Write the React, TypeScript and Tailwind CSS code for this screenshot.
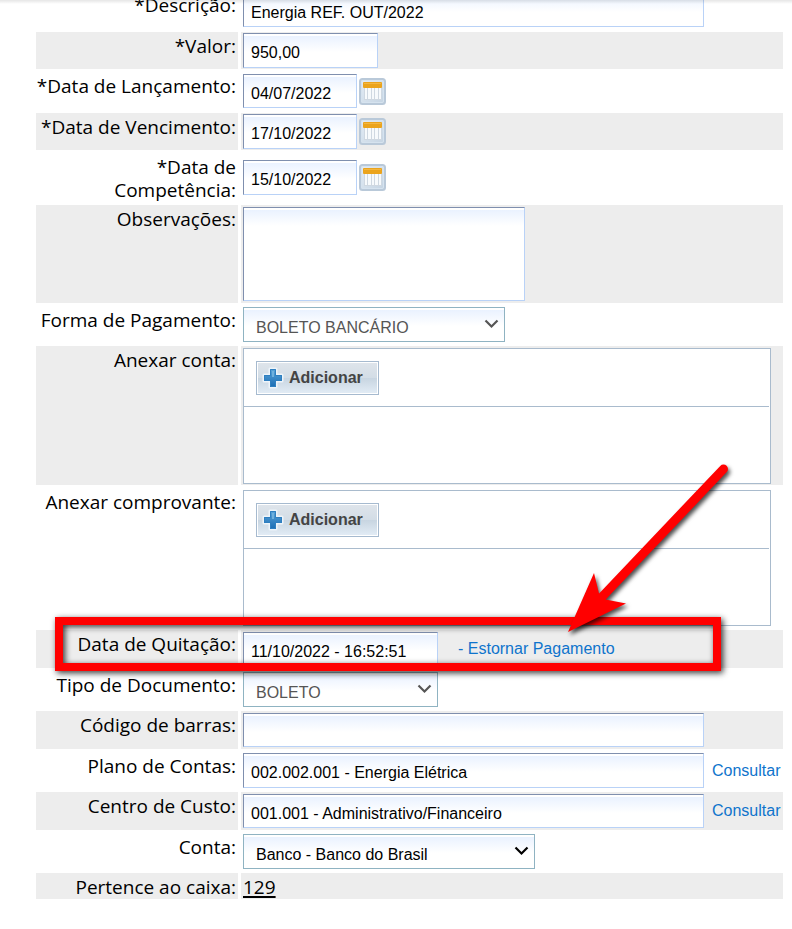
import { useId, type ReactNode } from "react";
import clsx from "clsx";

const fieldClass =
  "border border-t-[#7f8fae] border-l-[#7f8fae] border-r-[#b9d2f7] border-b-[#b9d2f7] bg-white bg-[linear-gradient(to_bottom,#ffffff_0px,#ffffff_2px,#eaf2ff_2px,#ffffff_18px)] pl-[7px] pt-[5px] text-base text-black outline-none";

type RowProps = {
  label: string;
  htmlFor?: string;
  shaded?: boolean;
  className?: string;
  children: ReactNode;
};

function Row({ label, htmlFor, shaded, className, children }: RowProps) {
  const bg = shaded ? "bg-[#ededed]" : "bg-white";

  return (
    <div className="grid grid-cols-[202px_1fr] gap-[3px]">
      <div
        className={clsx(
          "flex items-start justify-end pt-[3px] pr-0.5 text-right font-['Open_Sans','Noto_Sans',sans-serif] text-[19px] leading-[23px] whitespace-pre",
          bg,
        )}
      >
        <label htmlFor={htmlFor}>{label}</label>
      </div>
      <div className={clsx("flex items-center pl-0.5", bg, className)}>
        {children}
      </div>
    </div>
  );
}

function CalendarButton({ label }: { label: string }) {
  const gradientId = useId();

  return (
    <button type="button" aria-label={label} className="ml-0.5 shrink-0">
      <svg width="27" height="27" viewBox="0 0 27 27" fill="none">
        <defs>
          <linearGradient id={gradientId} x1="0" y1="0" x2="1" y2="1">
            <stop offset="0" stopColor="#e6eef6" />
            <stop offset="1" stopColor="#c3d3e2" />
          </linearGradient>
        </defs>
        <rect x="1" y="1" width="25" height="25" rx="2.5" fill={`url(#${gradientId})`} stroke="#b9c9d9" strokeWidth="2" />
        <rect x="2.5" y="2.5" width="22" height="22" rx="1.5" stroke="#d6e3ef" />
        <path d="M5 9h18v13H5z" fill="#cfd8e1" />
        <path d="M6 10h2v11H6zM9 10h3v11H9zM13 10h2v11h-2zM16 10h3v11h-3zM20 10h2v11h-2z" fill="#f7fafc" />
        <rect x="4" y="4" width="19" height="6" rx="1" fill="#eba41d" />
        <path d="M5 5.5h17" stroke="#f3b640" strokeWidth="1" />
      </svg>
    </button>
  );
}

type SelectProps = {
  id: string;
  value: string;
  disabled?: boolean;
  className: string;
};

function Select({ id, value, disabled, className }: SelectProps) {
  const color = disabled ? "text-[#555555]" : "text-black";

  return (
    <div className={clsx("relative h-[35px]", color, className)}>
      <select
        id={id}
        disabled={disabled}
        defaultValue={value}
        className="h-full w-full appearance-none border border-[#8fb3c2] bg-white bg-[linear-gradient(to_bottom,#ffffff_0px,#ffffff_2px,#eaf2ff_2px,#ffffff_18px)] pt-1.5 pl-3 text-base opacity-100 outline-none"
      >
        <option>{value}</option>
      </select>
      <svg
        className="pointer-events-none absolute top-3 right-1.5"
        width="15"
        height="10"
        viewBox="0 0 15 10"
        fill="none"
      >
        <path d="M1.5 1.5 7.5 7.5 13.5 1.5" stroke="currentColor" strokeWidth="2.2" />
      </svg>
    </div>
  );
}

function UploadPanel({ id }: { id: string }) {
  const gradientId = useId();

  return (
    <div className="h-[136px] w-[528px] border border-[#a9bbcd] bg-white">
      <div className="mr-px flex h-[58px] items-center border-b border-[#a9bbcd] pl-3">
        <button
          id={id}
          type="button"
          className="flex h-[34px] w-[123px] items-center border border-[#a6bacf] bg-[linear-gradient(to_bottom,#dfe5eb_0%,#d3dde6_49%,#c8d5e1_51%,#e3edf6_100%)] pl-[5px] text-base font-bold text-[#444444] shadow-[inset_0_0_0_1px_#ffffff]"
        >
          <svg width="22" height="22" viewBox="0 0 22 22" className="mr-[5px]">
            <defs>
              <linearGradient id={gradientId} x1="0" y1="0" x2="0" y2="1">
                <stop offset="0" stopColor="#5aa3d8" />
                <stop offset="1" stopColor="#1b6db4" />
              </linearGradient>
            </defs>
            <path
              d="M8 2h6v6h6v6h-6v6H8v-6H2V8h6z"
              fill={`url(#${gradientId})`}
              stroke="#edf4fa"
              strokeWidth="3"
              strokeLinejoin="round"
              paintOrder="stroke"
            />
            <path d="M8.5 2.5h5v6h6v5h-6v6h-5v-6h-6v-5h6z" fill="none" stroke="#2f7fc0" />
            <path d="M10 4h2v6h-2z" fill="#6fb0dd" />
          </svg>
          Adicionar
        </button>
      </div>
    </div>
  );
}

// Marcação em vermelho por cima do formulário
function Highlight() {
  return (
    <>
      <div className="pointer-events-none absolute top-[617px] left-[55px] h-[54px] w-[666px] border-8 border-[#ff0000] drop-shadow-[2px_2px_3px_rgba(0,0,0,0.8)]" />
      <svg
        className="pointer-events-none absolute top-[460px] left-[560px] drop-shadow-[2px_3px_2px_rgba(0,0,0,0.7)]"
        width="180"
        height="180"
        viewBox="560 460 180 180"
      >
        <path d="M723.5 469 600 599" stroke="#ff0000" strokeWidth="9" strokeLinecap="round" />
        <path d="M568 632 594 573 599 593.5 605.5 599.5 626 603.5z" fill="#ff0000" />
      </svg>
    </>
  );
}

export default function App() {
  return (
    <main className="relative overflow-hidden bg-white pb-[30px] font-['Liberation_Sans',Arial,sans-serif] text-black">
      <form className="-mt-[9px] flex flex-col gap-[3px] pr-[9px] pl-9">
        <Row label="*Descrição:" htmlFor="descricao" className="py-0.5">
          <input id="descricao" defaultValue="Energia REF. OUT/2022" className={clsx(fieldClass, "h-[34px] w-[461px]")} />
        </Row>

        <Row label="*Valor:" htmlFor="valor" shaded className="py-px">
          <input id="valor" defaultValue="950,00" className={clsx(fieldClass, "h-[35px] w-[135px]")} />
        </Row>

        <Row label="*Data de Lançamento:" htmlFor="lancamento" className="py-0.5">
          <input id="lancamento" defaultValue="04/07/2022" className={clsx(fieldClass, "h-[34px] w-[114px]")} />
          <CalendarButton label="Escolher data de lançamento" />
        </Row>

        <Row label="*Data de Vencimento:" htmlFor="vencimento" shaded className="py-px">
          <input id="vencimento" defaultValue="17/10/2022" className={clsx(fieldClass, "h-[35px] w-[114px]")} />
          <CalendarButton label="Escolher data de vencimento" />
        </Row>

        <Row label={"*Data de\nCompetência:"} htmlFor="competencia" className="min-h-[49px]">
          <input id="competencia" defaultValue="15/10/2022" className={clsx(fieldClass, "h-[35px] w-[114px]")} />
          <CalendarButton label="Escolher data de competência" />
        </Row>

        <Row label="Observações:" htmlFor="observacoes" shaded className="py-0.5">
          <textarea id="observacoes" className={clsx(fieldClass, "h-[94px] w-[282px] resize-none")} />
        </Row>

        <Row label="Forma de Pagamento:" htmlFor="forma" className="py-px">
          <Select id="forma" value="BOLETO BANCÁRIO" disabled className="w-[262px]" />
        </Row>

        <Row label="Anexar conta:" htmlFor="anexo-conta" shaded className="pt-0.5 pb-px">
          <UploadPanel id="anexo-conta" />
        </Row>

        <Row label="Anexar comprovante:" htmlFor="anexo-comprovante" className="pt-0.5 pb-px">
          <UploadPanel id="anexo-comprovante" />
        </Row>

        <Row label="Data de Quitação:" htmlFor="quitacao" shaded className="py-0.5">
          <input id="quitacao" defaultValue="11/10/2022 - 16:52:51" className={clsx(fieldClass, "h-[34px] w-[195px]")} />
          <a href="#estornar" className="ml-5 text-[#0f74cc]">
            - Estornar Pagamento
          </a>
        </Row>

        <Row label="Tipo de Documento:" htmlFor="tipo" className="py-px">
          <Select id="tipo" value="BOLETO" disabled className="w-[195px]" />
        </Row>

        <Row label="Código de barras:" htmlFor="barras" shaded className="py-0.5">
          <input id="barras" className={clsx(fieldClass, "h-[34px] w-[461px]")} />
        </Row>

        <Row label="Plano de Contas:" htmlFor="plano" className="py-px">
          <input id="plano" defaultValue="002.002.001 - Energia Elétrica" className={clsx(fieldClass, "h-[35px] w-[461px]")} />
          <a href="#plano-de-contas" className="ml-2 text-[#0f74cc]">
            Consultar
          </a>
        </Row>

        <Row label="Centro de Custo:" htmlFor="centro" shaded className="py-0.5">
          <input id="centro" defaultValue="001.001 - Administrativo/Financeiro" className={clsx(fieldClass, "h-[34px] w-[461px]")} />
          <a href="#centro-de-custo" className="ml-2 text-[#0f74cc]">
            Consultar
          </a>
        </Row>

        <Row label="Conta:" htmlFor="conta" className="py-px">
          <Select id="conta" value="Banco - Banco do Brasil" className="w-[292px]" />
        </Row>

        <Row label="Pertence ao caixa:" htmlFor="caixa" shaded>
          <a
            id="caixa"
            href="#caixa-129"
            className="pt-[3px] font-['Open_Sans','Noto_Sans',sans-serif] text-[19px] leading-[23px] underline decoration-2 underline-offset-2"
          >
            129
          </a>
        </Row>
      </form>

      <div className="pointer-events-none absolute inset-x-0 top-0 h-1 bg-linear-to-b from-black/10 to-transparent" />
      <Highlight />
    </main>
  );
}
